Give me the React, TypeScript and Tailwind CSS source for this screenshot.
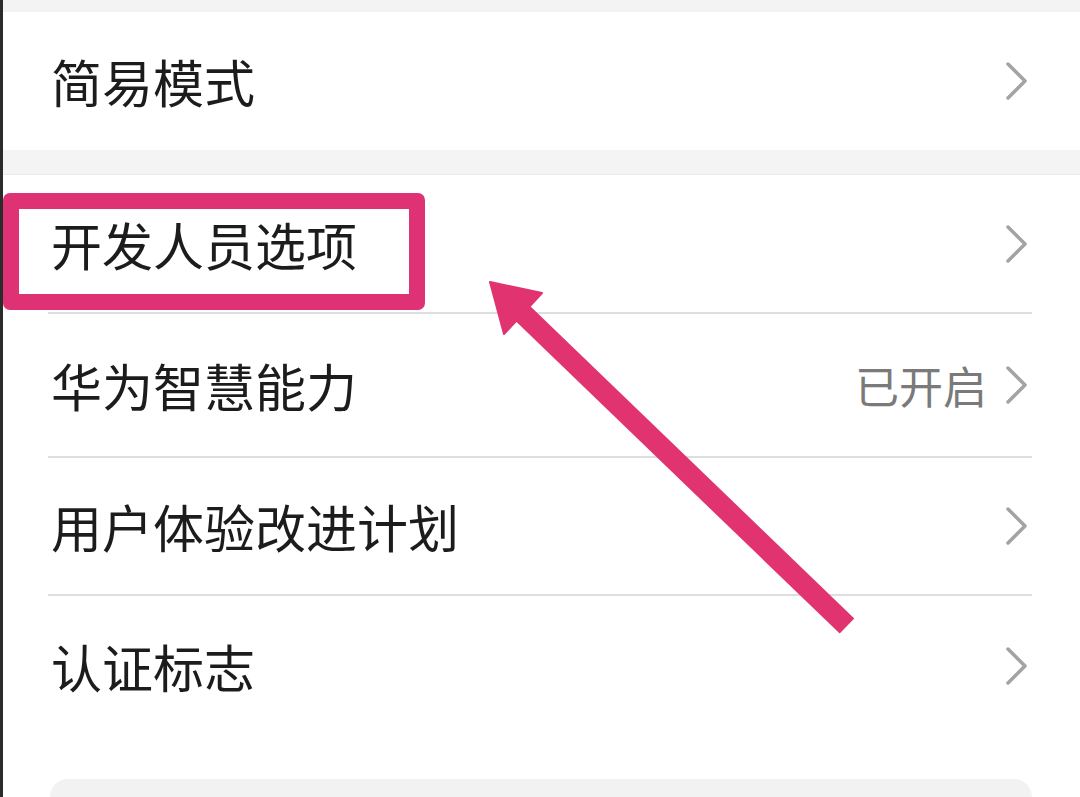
import React from 'react';

type Item = { label: string; value?: string; height: string; divider: boolean };

const Chevron: React.FC = () => (
    <svg width="24" height="40" viewBox="0 0 24 40" className="flex-shrink-0">
        <path d="M4 3 L21 20 L4 37" fill="none" stroke="#a3a3a3" strokeWidth="3.5" strokeLinecap="round" strokeLinejoin="round" />
    </svg>
);

const Row: React.FC<{ item: Item }> = ({ item }) => (
    <div className={`flex items-center ml-[45px] mr-[48px] pl-[3px] pr-[4px] ${item.height} ${item.divider ? 'border-b-2 border-[#dedede]' : ''}`}>
        <span className="flex-1 text-[51px] leading-none text-[#1c1c1c]">{item.label}</span>
        {item.value && (
            <span className="text-[44px] leading-none text-[#7a7a7a] mr-[17px]">{item.value}</span>
        )}
        <Chevron />
    </div>
);

const group: Item[] = [
    { label: '开发人员选项', height: 'h-[138px]', divider: true },
    { label: '华为智慧能力', value: '已开启', height: 'h-[144px]', divider: true },
    { label: '用户体验改进计划', height: 'h-[138px]', divider: true },
    { label: '认证标志', height: 'h-[140px]', divider: false },
];

const App: React.FC = () => {
    return (
        <div
            className="relative w-[1080px] h-[797px] overflow-hidden bg-white border-l-[3px] border-[#2b2b2b]"
            style={{ fontFamily: '"Noto Sans CJK SC", "Noto Sans", sans-serif' }}
        >
            <div className="h-[12px] bg-[#f3f3f3]" />

            {/* Simple mode */}
            <Row item={{ label: '简易模式', height: 'h-[138px]', divider: false }} />

            <div className="h-[25px] bg-[#f4f4f4] border-b border-[#ebebeb]" />

            {/* Main group */}
            <div className="pt-[1px]">
                {group.map((item) => (
                    <Row key={item.label} item={item} />
                ))}
            </div>

            {/* Next card peeking in */}
            <div className="mt-[43px] ml-[47px] mr-[48px] h-[40px] rounded-[18px] bg-[#f2f2f2]" />

            {/* Highlight box */}
            <div className="absolute left-0 top-[193px] w-[422px] h-[117px] rounded-[7px] border-[16px] border-[#df3274]" />

            {/* Arrow */}
            <svg className="absolute left-0 top-0" width="1080" height="797" viewBox="0 0 1080 797">
                <line x1="512" y1="306" x2="844" y2="626" stroke="#e1336f" strokeWidth="21" />
                <polygon points="487,282 539,293 501,334" fill="#e1336f" stroke="#e1336f" strokeWidth="2" strokeLinejoin="round" />
            </svg>
        </div>
    );
};

export default App;
